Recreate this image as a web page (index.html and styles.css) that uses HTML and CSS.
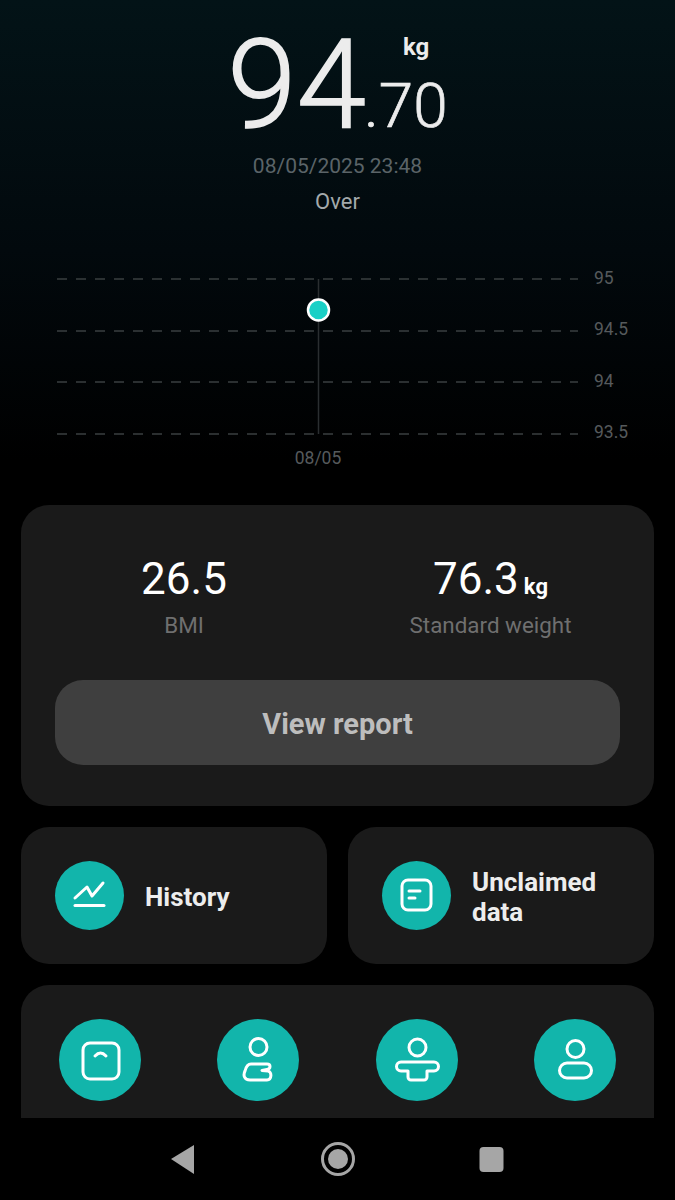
FILE: index.html
```html
<!doctype html>
<html>

<head>
  <meta charset="UTF-8">
  <title>Weight</title>
  <link rel="stylesheet" href="styles.css">
</head>

<body>
  <div class="screen">
    <div class="hero">
      <div class="weight">
        <span class="whole">94</span>
        <div class="frac">
          <span class="unit">kg</span>
          <span class="decimals">.70</span>
        </div>
      </div>
      <p class="date">08/05/2025 23:48</p>
      <p class="status">Over</p>

      <svg class="chart" viewBox="0 0 675 215" width="675" height="215">
        <g class="grid">
          <line x1="57" y1="19" x2="578" y2="19"></line>
          <line x1="57" y1="71" x2="578" y2="71"></line>
          <line x1="57" y1="122" x2="578" y2="122"></line>
          <line x1="57" y1="174" x2="578" y2="174"></line>
        </g>
        <line class="marker" x1="318.5" y1="19" x2="318.5" y2="174"></line>
        <circle class="dot" cx="318.5" cy="50" r="10.5"></circle>
        <g class="axis">
          <text x="594" y="24">95</text>
          <text x="594" y="75">94.5</text>
          <text x="594" y="127">94</text>
          <text x="594" y="178">93.5</text>
          <text class="day" x="318" y="204">08/05</text>
        </g>
      </svg>
    </div>

    <div class="cards">
      <section class="card summary">
        <div class="stats">
          <div class="stat">
            <div class="value">26.5</div>
            <div class="label">BMI</div>
          </div>
          <div class="stat">
            <div class="value">76.3<span class="value-unit">kg</span></div>
            <div class="label">Standard weight</div>
          </div>
        </div>
        <div class="report-btn">View report</div>
      </section>

      <div class="links">
        <section class="card link">
          <div class="round small">
            <svg viewBox="0 0 69 69" width="69" height="69">
              <path d="M20 37 32 26 37 35 48 22"></path>
              <path d="M20 44.500H49"></path>
            </svg>
          </div>
          <span class="link-text">History</span>
        </section>
        <section class="card link">
          <div class="round small">
            <svg viewBox="0 0 69 69" width="69" height="69">
              <rect x="20" y="19" width="29" height="30" rx="6"></rect>
              <path d="M27 30H38"></path>
              <path d="M27 37H33"></path>
            </svg>
          </div>
          <span class="link-text">Unclaimed data</span>
        </section>
      </div>

      <section class="card tools">
        <div class="round">
          <svg viewBox="0 0 82 82" width="82" height="82">
            <rect x="24" y="24" width="36" height="36" rx="7"></rect>
            <path d="M36 37Q41.500 31 47 37"></path>
          </svg>
        </div>
        <div class="round">
          <svg viewBox="0 0 82 82" width="82" height="82">
            <circle cx="41.500" cy="28" r="8.500"></circle>
            <path d="M34 45H50C54 45 54 50 50 50.500L45 51.500 51 52C55 52.500 55 61 50 61H33C27 61 26 56 28 52 29 48 31 45 34 45Z"></path>
          </svg>
        </div>
        <div class="round">
          <svg viewBox="0 0 82 82" width="82" height="82">
            <circle cx="41.500" cy="28.500" r="8.500"></circle>
            <path d="M25 43H58A4.500 4.500 0 0 1 58 52H51V58A3 3 0 0 1 48 61H35A3 3 0 0 1 32 58V52H25A4.500 4.500 0 0 1 25 43Z"></path>
          </svg>
        </div>
        <div class="round">
          <svg viewBox="0 0 82 82" width="82" height="82">
            <circle cx="41.500" cy="30" r="8.500"></circle>
            <rect x="25.500" y="44" width="32" height="15" rx="7.500"></rect>
          </svg>
        </div>
      </section>
    </div>
  </div>

  <nav class="navbar">
    <svg viewBox="0 0 34 34" width="34" height="34">
      <path class="nav-fill" d="M5 17 28 3V32Z"></path>
    </svg>
    <svg viewBox="0 0 34 34" width="34" height="34">
      <circle class="nav-ring" cx="17" cy="17" r="15.500"></circle>
      <circle class="nav-fill" cx="17" cy="17" r="10"></circle>
    </svg>
    <svg viewBox="0 0 34 34" width="34" height="34">
      <rect class="nav-fill" x="3.500" y="5" width="24" height="25" rx="4"></rect>
    </svg>
  </nav>
</body>

</html>
```

FILE: styles.css
```css
body {
  margin: 0;
  width: 675px;
  height: 1200px;
  overflow: hidden;
  display: flex;
  flex-direction: column;
  background: #000;
  font-family: "Roboto", sans-serif;
  color: #fff;
}

.screen {
  height: 1118px;
  overflow: hidden;
  background: linear-gradient(#031317 0, #02090d 250px, #000 460px);
}

/* weight header */
.hero {
  height: 505px;
  display: flex;
  flex-direction: column;
  align-items: center;
}

.weight {
  display: flex;
  align-items: flex-end;
  height: 148px;
  color: #ececec;
}

.whole {
  font-size: 125px;
  font-weight: 300;
  line-height: 126px;
  -webkit-text-stroke: 1.5px #ececec;
}

.frac {
  display: flex;
  flex-direction: column;
}

.unit {
  margin: 0 0 3px 37px;
  font-size: 24px;
  font-weight: 700;
  line-height: 28px;
}

.decimals {
  margin-left: -2px;
  font-size: 62px;
  font-weight: 300;
  line-height: 84px;
  -webkit-text-stroke: 0.7px #ececec;
}

.date {
  margin: 5px 0 0;
  font-size: 21px;
  line-height: 26px;
  color: #5b6468;
}

.status {
  margin: 10px 0 0;
  font-size: 22px;
  line-height: 26px;
  color: #a3a9ab;
}

.chart {
  margin-top: 45px;
}

.grid line {
  stroke: #3a3f40;
  stroke-width: 1.5;
  stroke-dasharray: 10 9;
}

.marker {
  stroke: #2a2e30;
  stroke-width: 1.5;
}

.dot {
  fill: #1ad0c6;
  stroke: #fff;
  stroke-width: 2.5;
}

.axis text {
  font-size: 17.500px;
  fill: #565a5c;
}

.axis .day {
  text-anchor: middle;
}

/* cards */
.cards {
  display: flex;
  flex-direction: column;
  gap: 21px;
  padding: 0 21px;
}

.card {
  background: #1a1a1a;
  border-radius: 28px;
}

.summary {
  height: 301px;
  box-sizing: border-box;
  padding: 48px 34px 0;
}

.stats {
  display: grid;
  grid-template-columns: 258px 1fr;
}

.stat {
  text-align: center;
}

.stat:last-child {
  padding-left: 48px;
}

.value {
  font-size: 44px;
  line-height: 52px;
}

.value-unit {
  margin-left: 5px;
  font-size: 22px;
  font-weight: 700;
  line-height: 0;
}

.label {
  margin-top: 7px;
  font-size: 22.400px;
  line-height: 26px;
  color: #6f6f6f;
}

.report-btn {
  margin-top: 42px;
  height: 85px;
  border-radius: 28px;
  background: #3f3f3f;
  font-size: 29px;
  font-weight: 700;
  line-height: 88px;
  text-align: center;
  color: #bdbdbd;
}

.links {
  display: grid;
  grid-template-columns: 306px 306px;
  gap: 21px;
}

.link {
  height: 137px;
  display: flex;
  align-items: center;
  gap: 21px;
  padding: 0 34px;
}

.link-text {
  padding-top: 3px;
  font-size: 26px;
  font-weight: 700;
  line-height: 30px;
  color: #ededed;
}

.round {
  flex: none;
  width: 82px;
  height: 82px;
  border-radius: 50%;
  background: #12b5ab;
}

.round.small {
  width: 69px;
  height: 69px;
}

.round svg {
  display: block;
  fill: none;
  stroke: #fff;
  stroke-width: 3;
  stroke-linecap: round;
  stroke-linejoin: round;
}

.tools {
  height: 200px;
  box-sizing: border-box;
  display: flex;
  justify-content: space-between;
  padding: 34px 38px 0;
}

/* android nav */
.navbar {
  height: 82px;
  display: flex;
  justify-content: center;
  align-items: center;
  gap: 121px;
}

.nav-fill {
  fill: #a6a6a6;
}

.nav-ring {
  fill: none;
  stroke: #a6a6a6;
  stroke-width: 3;
}
```
